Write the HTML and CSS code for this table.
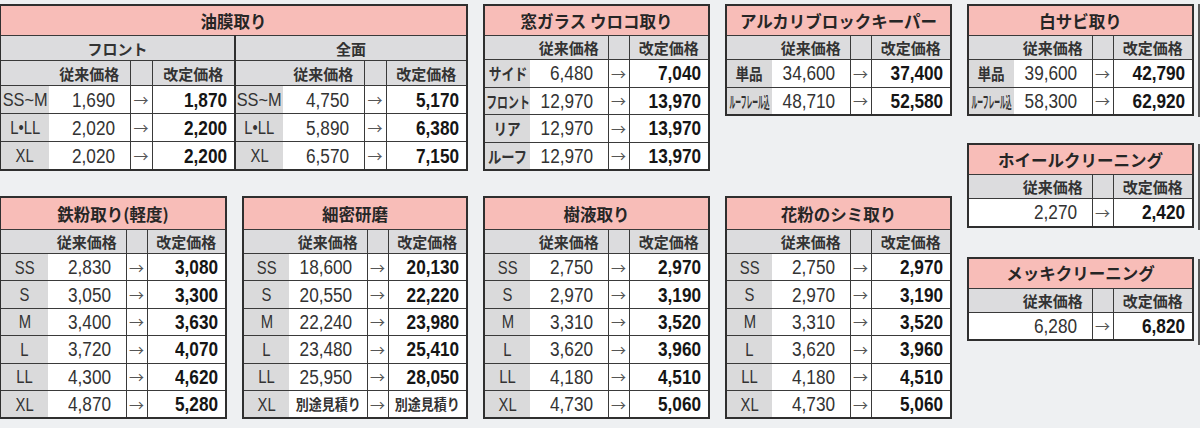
FILE: index.html
```html
<!DOCTYPE html>
<html lang="ja">
<head>
<meta charset="utf-8">
<title>料金表</title>
<link rel="stylesheet" href="styles.css">
</head>
<body>
<div class="board">

  <table class="pt t1 g-t1">
    <colgroup><col class="w-lab1"><col class="w-old1"><col class="w-arr1"><col class="w-new1"><col class="w-lab1b"><col class="w-old1"><col class="w-arr1"><col></colgroup>
    <tr class="t"><th colspan="8">油膜取り</th></tr>
    <tr class="h"><td colspan="4" class="div">フロント</td><td colspan="4">全面</td></tr>
    <tr class="h"><td></td><td>従来価格</td><td class="arr"></td><td class="div">改定価格</td><td></td><td>従来価格</td><td class="arr"></td><td>改定価格</td></tr>
    <tr class="r"><td class="lab"><div class="c"><span class="s sw">SS~M</span></div></td><td class="old"><span class="n">1,690</span></td><td class="arr">→</td><td class="new div"><span class="n">1,870</span></td><td class="lab"><div class="c"><span class="s sw">SS~M</span></div></td><td class="old"><span class="n">4,750</span></td><td class="arr">→</td><td class="new"><span class="n">5,170</span></td></tr>
    <tr class="r"><td class="lab"><div class="c"><span class="s">L•LL</span></div></td><td class="old"><span class="n">2,020</span></td><td class="arr">→</td><td class="new div"><span class="n">2,200</span></td><td class="lab"><div class="c"><span class="s">L•LL</span></div></td><td class="old"><span class="n">5,890</span></td><td class="arr">→</td><td class="new"><span class="n">6,380</span></td></tr>
    <tr class="r"><td class="lab"><div class="c"><span class="s">XL</span></div></td><td class="old"><span class="n">2,020</span></td><td class="arr">→</td><td class="new div"><span class="n">2,200</span></td><td class="lab"><div class="c"><span class="s">XL</span></div></td><td class="old"><span class="n">6,570</span></td><td class="arr">→</td><td class="new"><span class="n">7,150</span></td></tr>
  </table>

  <table class="pt g-t2">
    <colgroup><col class="w-lab"><col class="w-old"><col class="w-arr"><col></colgroup>
    <tr class="t"><th colspan="4">窓ガラス ウロコ取り</th></tr>
    <tr class="h"><td></td><td>従来価格</td><td class="arr"></td><td>改定価格</td></tr>
    <tr class="r"><td class="lab jp"><div class="c"><span class="j j80">サイド</span></div></td><td class="old"><span class="n">6,480</span></td><td class="arr">→</td><td class="new"><span class="n">7,040</span></td></tr>
    <tr class="r"><td class="lab jp"><div class="c"><span class="j j68">フロント</span></div></td><td class="old"><span class="n">12,970</span></td><td class="arr">→</td><td class="new"><span class="n">13,970</span></td></tr>
    <tr class="r"><td class="lab jp"><div class="c"><span class="j j85">リア</span></div></td><td class="old"><span class="n">12,970</span></td><td class="arr">→</td><td class="new"><span class="n">13,970</span></td></tr>
    <tr class="r"><td class="lab jp"><div class="c"><span class="j j83">ルーフ</span></div></td><td class="old"><span class="n">12,970</span></td><td class="arr">→</td><td class="new"><span class="n">13,970</span></td></tr>
  </table>

  <table class="pt g-t3">
    <colgroup><col class="w-lab"><col class="w-old"><col class="w-arr"><col></colgroup>
    <tr class="t"><th colspan="4">アルカリブロックキーパー</th></tr>
    <tr class="h"><td></td><td>従来価格</td><td class="arr"></td><td>改定価格</td></tr>
    <tr class="r"><td class="lab jp"><div class="c"><span class="j j85">単品</span></div></td><td class="old"><span class="n">34,600</span></td><td class="arr">→</td><td class="new"><span class="n">37,400</span></td></tr>
    <tr class="r"><td class="lab jp"><div class="c"><span class="j j36">ルーフレール込</span></div></td><td class="old"><span class="n">48,710</span></td><td class="arr">→</td><td class="new"><span class="n">52,580</span></td></tr>
  </table>

  <div class="stack g-c5">
    <table class="pt">
      <colgroup><col class="w-lab"><col class="w-old"><col class="w-arr"><col></colgroup>
      <tr class="t"><th colspan="4">白サビ取り</th></tr>
      <tr class="h"><td></td><td>従来価格</td><td class="arr"></td><td>改定価格</td></tr>
      <tr class="r"><td class="lab jp"><div class="c"><span class="j j85">単品</span></div></td><td class="old"><span class="n">39,600</span></td><td class="arr">→</td><td class="new"><span class="n">42,790</span></td></tr>
      <tr class="r"><td class="lab jp"><div class="c"><span class="j j36">ルーフレール込</span></div></td><td class="old"><span class="n">58,300</span></td><td class="arr">→</td><td class="new"><span class="n">62,920</span></td></tr>
    </table>
    <table class="pt mt-a">
      <colgroup><col class="w-lab"><col class="w-old"><col class="w-arr"><col></colgroup>
      <tr class="t"><th colspan="4">ホイールクリーニング</th></tr>
      <tr class="h"><td></td><td>従来価格</td><td class="arr"></td><td>改定価格</td></tr>
      <tr class="r"><td class="blank"></td><td class="old"><span class="n">2,270</span></td><td class="arr">→</td><td class="new"><span class="n">2,420</span></td></tr>
    </table>
    <table class="pt mt-b">
      <colgroup><col class="w-lab"><col class="w-old"><col class="w-arr"><col></colgroup>
      <tr class="t"><th colspan="4">メッキクリーニング</th></tr>
      <tr class="h"><td></td><td>従来価格</td><td class="arr"></td><td>改定価格</td></tr>
      <tr class="r"><td class="blank"></td><td class="old"><span class="n">6,280</span></td><td class="arr">→</td><td class="new"><span class="n">6,820</span></td></tr>
    </table>
  </div>

  <div class="stack g-c6">
    <div class="stub s1"></div>
    <div class="stub s2 mt-a"></div>
    <div class="stub s2 mt-b"></div>
  </div>

  <table class="pt low g-b1">
    <colgroup><col class="w-labx"><col class="w-old"><col class="w-arr"><col></colgroup>
    <tr class="t"><th colspan="4">鉄粉取り(軽度)</th></tr>
    <tr class="h"><td></td><td>従来価格</td><td class="arr"></td><td>改定価格</td></tr>
    <tr class="r"><td class="lab"><div class="c"><span class="s">SS</span></div></td><td class="old"><span class="n">2,830</span></td><td class="arr">→</td><td class="new"><span class="n">3,080</span></td></tr>
    <tr class="r"><td class="lab"><div class="c"><span class="s">S</span></div></td><td class="old"><span class="n">3,050</span></td><td class="arr">→</td><td class="new"><span class="n">3,300</span></td></tr>
    <tr class="r"><td class="lab"><div class="c"><span class="s">M</span></div></td><td class="old"><span class="n">3,400</span></td><td class="arr">→</td><td class="new"><span class="n">3,630</span></td></tr>
    <tr class="r"><td class="lab"><div class="c"><span class="s">L</span></div></td><td class="old"><span class="n">3,720</span></td><td class="arr">→</td><td class="new"><span class="n">4,070</span></td></tr>
    <tr class="r"><td class="lab"><div class="c"><span class="s">LL</span></div></td><td class="old"><span class="n">4,300</span></td><td class="arr">→</td><td class="new"><span class="n">4,620</span></td></tr>
    <tr class="r"><td class="lab"><div class="c"><span class="s">XL</span></div></td><td class="old"><span class="n">4,870</span></td><td class="arr">→</td><td class="new"><span class="n">5,280</span></td></tr>
  </table>

  <table class="pt low g-b2">
    <colgroup><col class="w-lab"><col class="w-old"><col class="w-arr"><col></colgroup>
    <tr class="t"><th colspan="4">細密研磨</th></tr>
    <tr class="h"><td></td><td>従来価格</td><td class="arr"></td><td>改定価格</td></tr>
    <tr class="r"><td class="lab"><div class="c"><span class="s">SS</span></div></td><td class="old"><span class="n">18,600</span></td><td class="arr">→</td><td class="new"><span class="n">20,130</span></td></tr>
    <tr class="r"><td class="lab"><div class="c"><span class="s">S</span></div></td><td class="old"><span class="n">20,550</span></td><td class="arr">→</td><td class="new"><span class="n">22,220</span></td></tr>
    <tr class="r"><td class="lab"><div class="c"><span class="s">M</span></div></td><td class="old"><span class="n">22,240</span></td><td class="arr">→</td><td class="new"><span class="n">23,980</span></td></tr>
    <tr class="r"><td class="lab"><div class="c"><span class="s">L</span></div></td><td class="old"><span class="n">23,480</span></td><td class="arr">→</td><td class="new"><span class="n">25,410</span></td></tr>
    <tr class="r"><td class="lab"><div class="c"><span class="s">LL</span></div></td><td class="old"><span class="n">25,950</span></td><td class="arr">→</td><td class="new"><span class="n">28,050</span></td></tr>
    <tr class="r"><td class="lab"><div class="c"><span class="s">XL</span></div></td><td class="old est"><div class="c"><span class="j j88">別途見積り</span></div></td><td class="arr">→</td><td class="new est"><div class="c"><span class="j j88">別途見積り</span></div></td></tr>
  </table>

  <table class="pt low g-b3">
    <colgroup><col class="w-lab"><col class="w-old"><col class="w-arr"><col></colgroup>
    <tr class="t"><th colspan="4">樹液取り</th></tr>
    <tr class="h"><td></td><td>従来価格</td><td class="arr"></td><td>改定価格</td></tr>
    <tr class="r"><td class="lab"><div class="c"><span class="s">SS</span></div></td><td class="old"><span class="n">2,750</span></td><td class="arr">→</td><td class="new"><span class="n">2,970</span></td></tr>
    <tr class="r"><td class="lab"><div class="c"><span class="s">S</span></div></td><td class="old"><span class="n">2,970</span></td><td class="arr">→</td><td class="new"><span class="n">3,190</span></td></tr>
    <tr class="r"><td class="lab"><div class="c"><span class="s">M</span></div></td><td class="old"><span class="n">3,310</span></td><td class="arr">→</td><td class="new"><span class="n">3,520</span></td></tr>
    <tr class="r"><td class="lab"><div class="c"><span class="s">L</span></div></td><td class="old"><span class="n">3,620</span></td><td class="arr">→</td><td class="new"><span class="n">3,960</span></td></tr>
    <tr class="r"><td class="lab"><div class="c"><span class="s">LL</span></div></td><td class="old"><span class="n">4,180</span></td><td class="arr">→</td><td class="new"><span class="n">4,510</span></td></tr>
    <tr class="r"><td class="lab"><div class="c"><span class="s">XL</span></div></td><td class="old"><span class="n">4,730</span></td><td class="arr">→</td><td class="new"><span class="n">5,060</span></td></tr>
  </table>

  <table class="pt low g-b4">
    <colgroup><col class="w-lab"><col class="w-old"><col class="w-arr"><col></colgroup>
    <tr class="t"><th colspan="4">花粉のシミ取り</th></tr>
    <tr class="h"><td></td><td>従来価格</td><td class="arr"></td><td>改定価格</td></tr>
    <tr class="r"><td class="lab"><div class="c"><span class="s">SS</span></div></td><td class="old"><span class="n">2,750</span></td><td class="arr">→</td><td class="new"><span class="n">2,970</span></td></tr>
    <tr class="r"><td class="lab"><div class="c"><span class="s">S</span></div></td><td class="old"><span class="n">2,970</span></td><td class="arr">→</td><td class="new"><span class="n">3,190</span></td></tr>
    <tr class="r"><td class="lab"><div class="c"><span class="s">M</span></div></td><td class="old"><span class="n">3,310</span></td><td class="arr">→</td><td class="new"><span class="n">3,520</span></td></tr>
    <tr class="r"><td class="lab"><div class="c"><span class="s">L</span></div></td><td class="old"><span class="n">3,620</span></td><td class="arr">→</td><td class="new"><span class="n">3,960</span></td></tr>
    <tr class="r"><td class="lab"><div class="c"><span class="s">LL</span></div></td><td class="old"><span class="n">4,180</span></td><td class="arr">→</td><td class="new"><span class="n">4,510</span></td></tr>
    <tr class="r"><td class="lab"><div class="c"><span class="s">XL</span></div></td><td class="old"><span class="n">4,730</span></td><td class="arr">→</td><td class="new"><span class="n">5,060</span></td></tr>
  </table>

</div>
</body>
</html>
```

FILE: styles.css
```css
html, body {
  margin: 0;
  padding: 0;
  background: #eef0f2;
  overflow: hidden;
}

body {
  width: 1200px;
  height: 428px;
  font-family: "Noto Sans CJK JP", "Liberation Sans", sans-serif;
  color: #2b2b2b;
}

.board {
  display: grid;
  grid-template-columns: 228px 15px 226px 15px 227px 15px 227px 15px 227px 4px 40px;
  grid-template-rows: 167px 25px 232px;
  align-items: start;
  padding-top: 4px;
  margin-left: -1px;
}

.g-t1 { grid-column: 1 / 4; grid-row: 1; }
.g-t2 { grid-column: 5; grid-row: 1; }
.g-t3 { grid-column: 7; grid-row: 1; }
.g-c5 { grid-column: 9; grid-row: 1 / 4; }
.g-c6 { grid-column: 11; grid-row: 1 / 4; }
.g-b1 { grid-column: 1; grid-row: 3; }
.g-b2 { grid-column: 3; grid-row: 3; }
.g-b3 { grid-column: 5; grid-row: 3; }
.g-b4 { grid-column: 7; grid-row: 3; }

.stack {
  display: flex;
  flex-direction: column;
}
.mt-a { margin-top: 27px; }
.mt-b { margin-top: 29px; }

.stub {
  border-left: 2px solid #5a5a5a;
  border-top: 2px solid #5a5a5a;
  background: #f1f1f1;
}
.stub.s1 { height: 111px; }
.stub.s2 { height: 84px; }

/* price table */
.pt {
  width: 100%;
  border-collapse: collapse;
  table-layout: fixed;
  border: 2px solid #2f2f2f;
  background: #fff;
}

.w-lab { width: 46px; }
.w-labx { width: 48px; }
.w-old { width: 78px; }
.w-arr { width: 21px; }
.w-lab1 { width: 49px; }
.w-lab1b { width: 48px; }
.w-old1 { width: 81px; }
.w-arr1 { width: 22px; }
.w-new1 { width: 83px; }

.pt td, .pt th {
  padding: 0;
  line-height: 1;
  white-space: nowrap;
  vertical-align: middle;
}

.pt tr.t th {
  height: 28px;
  background: #f8bdb8;
  border-bottom: 1px solid #3a3a3a;
  font-size: 16.5px;
  font-weight: 700;
  text-align: center;
  color: #262626;
  padding-top: 1px;
}
.pt.low tr.t th { height: 30px; }

.pt tr.h td {
  height: 23px;
  background: #dcdcde;
  border-bottom: 1px solid #3a3a3a;
  font-size: 15px;
  font-weight: 700;
  text-align: center;
  color: #333;
}
.pt.t1 tr.h td { height: 24px; }

.pt tr.r td {
  height: 26.5px;
  border-bottom: 1px solid #3a3a3a;
}
.pt.t1 tr.r td { height: 27px; }
.pt.low tr.r td { height: 26.4px; }

.pt td.arr {
  border-left: 1px solid #3a3a3a;
  border-right: 1px solid #3a3a3a;
  text-align: center;
  font-size: 15px;
  color: #555;
  font-weight: 400;
}

.pt td.div {
  border-right: 2px solid #2f2f2f;
}

.pt td.lab {
  background: #dadadb;
  font-family: "Liberation Sans", sans-serif;
  font-size: 19px;
  color: #333;
}
.pt td.lab.jp {
  font-family: "Noto Sans CJK JP", sans-serif;
  font-size: 16px;
  font-weight: 700;
}

.c {
  display: flex;
  justify-content: center;
  align-items: center;
}

.s, .j, .n {
  display: inline-block;
  white-space: nowrap;
}
.s { transform: scaleX(0.78); }
.s.sw { transform: scaleX(0.86); }
.j80 { transform: scaleX(0.8); }
.j68 { transform: scaleX(0.68); }
.j85 { transform: scaleX(0.85); }
.j83 { transform: scaleX(0.83); }
.j36 { transform: scaleX(0.36); }
.j88 { transform: scaleX(0.9); }

.n {
  transform: scaleX(0.86);
  transform-origin: right center;
}

.pt td.blank { background: #fff; }

.pt td.old {
  text-align: right;
  padding-right: 14px;
  font-family: "Liberation Sans", sans-serif;
  font-size: 20px;
  color: #333;
}

.pt td.new {
  text-align: right;
  padding-right: 7px;
  font-family: "Liberation Sans", sans-serif;
  font-size: 20px;
  font-weight: 700;
  color: #151515;
}

.pt td.est {
  padding-right: 0;
  font-family: "Noto Sans CJK JP", sans-serif;
  font-size: 14.5px;
  font-weight: 700;
  color: #333;
}
```
